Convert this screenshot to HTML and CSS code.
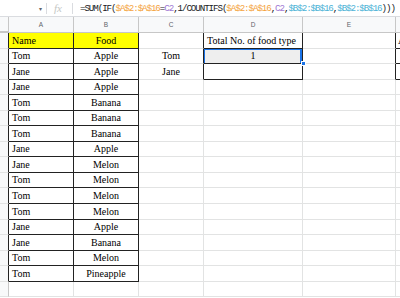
FILE: index.html
```html
<!DOCTYPE html>
<html>
<head>
  <title>Sheet</title>
  <link rel="stylesheet" href="styles.css">
</head>
<body>
  <div class="formula-bar">
    <div class="name-box"><span class="caret">&#9662;</span></div>
    <div class="fx">fx</div>
    <div class="formula">=SUM(IF(<span class="r1">$A$2:$A$16</span>=<span class="r2">C2</span>,1/COUNTIFS(<span class="r1">$A$2:$A$16</span>,<span class="r2">C2</span>,<span class="r3">$B$2:$B$16</span>,<span class="r3">$B$2:$B$16</span>)))</div>
  </div>

  <div class="sheet">
    <!-- column headers -->
    <div class="c corner"></div>
    <div class="c ch">A</div>
    <div class="c ch">B</div>
    <div class="c ch">C</div>
    <div class="c ch">D</div>
    <div class="c ch">E</div>
    <div class="c ch"></div>

    <!-- row 1 -->
    <div class="c rh bk-r"></div>
    <div class="c yel bk-r bk-b">Name</div>
    <div class="c yel mid bk-r bk-b">Food</div>
    <div class="c bk-r"></div>
    <div class="c bk-r bk-b">Total No. of food type</div>
    <div class="c bk-r"></div>
    <div class="c bk-b cut">A</div>

    <!-- row 2 -->
    <div class="c rh bk-r"></div>
    <div class="c bk-r bk-b">Tom</div>
    <div class="c mid bk-r bk-b">Apple</div>
    <div class="c mid bk-r">Tom</div>
    <div class="c mid bk-r bk-b sel">1<span class="handle"></span></div>
    <div class="c bk-r"></div>
    <div class="c bk-b"></div>

    <!-- row 3 -->
    <div class="c rh bk-r"></div>
    <div class="c bk-r bk-b">Jane</div>
    <div class="c mid bk-r bk-b">Apple</div>
    <div class="c mid bk-r">Jane</div>
    <div class="c bk-r bk-b"></div>
    <div class="c bk-r"></div>
    <div class="c bk-b"></div>

    <div class="c rh bk-r"></div><div class="c bk-r bk-b">Jane</div><div class="c mid bk-r bk-b">Apple</div><div class="c"></div><div class="c"></div><div class="c"></div><div class="c"></div>
    <div class="c rh bk-r"></div><div class="c bk-r bk-b">Tom</div><div class="c mid bk-r bk-b">Banana</div><div class="c"></div><div class="c"></div><div class="c"></div><div class="c"></div>
    <div class="c rh bk-r"></div><div class="c bk-r bk-b">Tom</div><div class="c mid bk-r bk-b">Banana</div><div class="c"></div><div class="c"></div><div class="c"></div><div class="c"></div>
    <div class="c rh bk-r"></div><div class="c bk-r bk-b">Tom</div><div class="c mid bk-r bk-b">Banana</div><div class="c"></div><div class="c"></div><div class="c"></div><div class="c"></div>
    <div class="c rh bk-r"></div><div class="c bk-r bk-b">Jane</div><div class="c mid bk-r bk-b">Apple</div><div class="c"></div><div class="c"></div><div class="c"></div><div class="c"></div>
    <div class="c rh bk-r"></div><div class="c bk-r bk-b">Jane</div><div class="c mid bk-r bk-b">Melon</div><div class="c"></div><div class="c"></div><div class="c"></div><div class="c"></div>
    <div class="c rh bk-r"></div><div class="c bk-r bk-b">Tom</div><div class="c mid bk-r bk-b">Melon</div><div class="c"></div><div class="c"></div><div class="c"></div><div class="c"></div>
    <div class="c rh bk-r"></div><div class="c bk-r bk-b">Tom</div><div class="c mid bk-r bk-b">Melon</div><div class="c"></div><div class="c"></div><div class="c"></div><div class="c"></div>
    <div class="c rh bk-r"></div><div class="c bk-r bk-b">Tom</div><div class="c mid bk-r bk-b">Melon</div><div class="c"></div><div class="c"></div><div class="c"></div><div class="c"></div>
    <div class="c rh bk-r"></div><div class="c bk-r bk-b">Jane</div><div class="c mid bk-r bk-b">Apple</div><div class="c"></div><div class="c"></div><div class="c"></div><div class="c"></div>
    <div class="c rh bk-r"></div><div class="c bk-r bk-b">Jane</div><div class="c mid bk-r bk-b">Banana</div><div class="c"></div><div class="c"></div><div class="c"></div><div class="c"></div>
    <div class="c rh bk-r"></div><div class="c bk-r bk-b">Tom</div><div class="c mid bk-r bk-b">Melon</div><div class="c"></div><div class="c"></div><div class="c"></div><div class="c"></div>
    <div class="c rh bk-r"></div><div class="c bk-r bk-b">Tom</div><div class="c mid bk-r bk-b">Pineapple</div><div class="c"></div><div class="c"></div><div class="c"></div><div class="c"></div>
    <div class="c rh"></div><div class="c"></div><div class="c"></div><div class="c"></div><div class="c"></div><div class="c"></div><div class="c"></div>
  </div>
</body>
</html>
```

FILE: styles.css
```css
/* sheet view */
body {
  margin: 0;
  width: 400px;
  height: 298px;
  overflow: hidden;
  background-color: #fff;
  font-family: "Liberation Serif", "Times New Roman", serif;
}

.formula-bar {
  display: flex;
  align-items: center;
  height: 16px;
  border-bottom: 1px solid #dadce0;
  white-space: nowrap;
}

.name-box {
  width: 47px;
  height: 11px;
  border-right: 1px solid #dadce0;
  display: flex;
  justify-content: flex-end;
  align-items: center;
  padding-right: 4px;
  box-sizing: border-box;
}

.caret {
  font-family: "DejaVu Sans", sans-serif;
  font-size: 6px;
  color: #5f6368;
}

.fx {
  width: 26px;
  height: 11px;
  border-right: 1px solid #dadce0;
  box-sizing: border-box;
  padding-left: 7px;
  font-style: italic;
  font-size: 11px;
  line-height: 10px;
  color: #c4c7c5;
}

.formula {
  padding: 1px 0 0 7px;
  font-family: "Liberation Mono", "DejaVu Sans Mono", monospace;
  font-size: 9.2px;
  letter-spacing: -1.08px;
  color: #202124;
}

.r1 { color: #f4a33d; }
.r2 { color: #a077d3; }
.r3 { color: #4cb2d6; }

.sheet {
  display: grid;
  grid-template-columns: 9px 65px 65px 65px 99px 93px 40px;
  grid-template-rows: 16px repeat(17, 15.55px);
}

.c {
  position: relative;
  box-sizing: border-box;
  border-right: 1px solid #e2e3e3;
  border-bottom: 1px solid #e2e3e3;
  display: flex;
  align-items: flex-end;
  padding: 0 3px 1px;
  font-size: 10px;
  line-height: 12px;
  color: #000;
  white-space: nowrap;
  overflow: hidden;
}

.corner,
.rh,
.ch {
  background-color: #f8f9fa;
  border-right-color: #c7c7c7;
  border-bottom-color: #c7c7c7;
  padding: 0;
}

.corner {
  border-bottom: 2px solid #c7c7c7;
}

.ch {
  justify-content: center;
  align-items: center;
  font-family: "Liberation Sans", Arial, sans-serif;
  font-size: 6.5px;
  color: #5f6368;
}

.rh {
  border-bottom-color: #e2e3e3;
}

.mid {
  justify-content: center;
}

.yel {
  background-color: #ffff00;
}

.bk-r {
  border-right-color: #222;
}

.bk-b {
  border-bottom-color: #222;
}

.cut {
  padding-left: 2px;
}

.sel {
  background-color: #eeeeee;
  box-shadow: inset 0 1px 0 #1a73e8, inset -2px 0 0 #1a73e8, inset 1px 0 0 #1a73e8;
  overflow: visible;
}

.handle {
  position: absolute;
  right: -4px;
  bottom: -3px;
  width: 5px;
  height: 5px;
  background-color: #1a73e8;
  border: 1px solid #fff;
  box-sizing: border-box;
  z-index: 2;
}
```
